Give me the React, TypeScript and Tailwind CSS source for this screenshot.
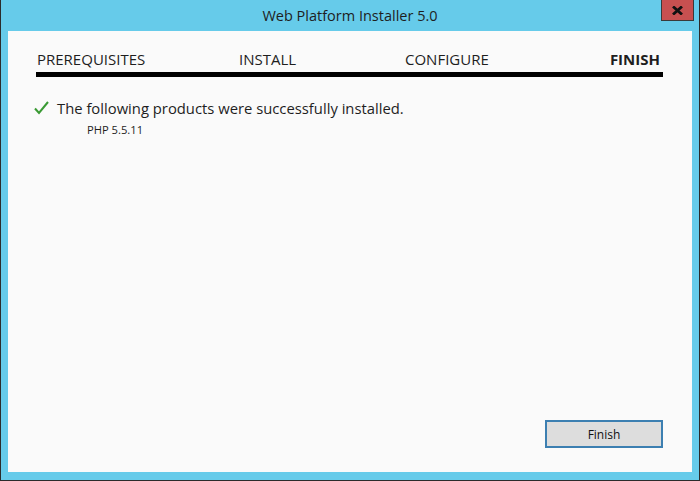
import React from "react";

const tabs = [
  { label: "PREREQUISITES", width: "w-[202px]" },
  { label: "INSTALL", width: "w-[166px]" },
  { label: "CONFIGURE", width: "flex-1" },
];

export default function App() {
  return (
    <div
      className="w-[700px] h-[481px] bg-[#66cbea] border-x border-b border-[#2b2b2b] flex flex-col relative text-[#1e1e1e]"
      style={{ fontFamily: '"Open Sans", "Noto Sans", sans-serif' }}
    >
      {/* TITLE BAR */}
      <div className="h-[31px] flex items-center justify-center shrink-0">
        <span className="text-[14.5px] leading-none pt-[1px]">Web Platform Installer 5.0</span>
      </div>
      <button className="absolute top-0 right-[5px] w-[33px] h-[21px] bg-[#c75050] border border-[#3a3a3a] border-t-0 flex items-center justify-center">
        <svg width="11" height="9" viewBox="0 0 11 9">
          <path d="M1 0.5 L10 8.5 M10 0.5 L1 8.5" stroke="#111" strokeWidth="2.8" />
        </svg>
      </button>

      {/* CONTENT */}
      <div className="flex-1 mx-[7px] mb-[8px] bg-[#fafafa] flex flex-col pl-[28px] pr-[29px] pt-[18px] pb-[24px]">
        <div className="flex items-center h-[20px] px-[1px] text-[15px]">
          {tabs.map((t) => (
            <div key={t.label} className={t.width}>
              {t.label}
            </div>
          ))}
          <div className="font-bold pr-[2px]">FINISH</div>
        </div>
        <div className="h-[5px] bg-black mt-[3px]" />

        <div className="flex items-center mt-[21px] h-[20px] -ml-[2px]">
          <svg width="15" height="14" viewBox="0 0 15 14" className="mr-[8px]">
            <path d="M1 7.5 L5 12 L14 1" fill="none" stroke="#3a9a34" strokeWidth="2" />
          </svg>
          <span className="text-[14.8px]">The following products were successfully installed.</span>
        </div>
        <div className="pl-[51px] mt-[4px] text-[11.2px] leading-[16px]">PHP 5.5.11</div>

        <div className="mt-auto flex justify-end">
          <button className="w-[118px] h-[28px] bg-[#dddddd] border-2 border-[#3c7fb1] text-[12px] text-[#111] pt-[1px]">
            Finish
          </button>
        </div>
      </div>
    </div>
  );
}
